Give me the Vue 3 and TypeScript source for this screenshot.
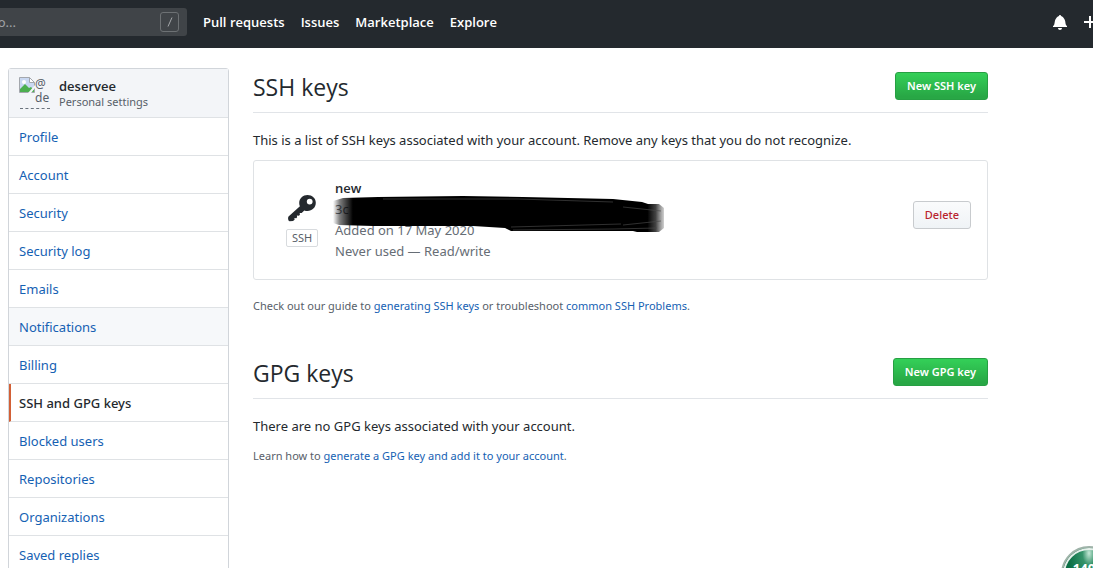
<script setup lang="ts">
const links: string[] = ['Pull requests', 'Issues', 'Marketplace', 'Explore']
const menu: string[] = [
  'Profile', 'Account', 'Security', 'Security log', 'Emails', 'Notifications', 'Billing',
  'SSH and GPG keys', 'Blocked users', 'Repositories', 'Organizations', 'Saved replies',
]
const current = 'SSH and GPG keys'
const hovered = 'Notifications'
</script>

<template>
  <div class="page">
    <header class="topbar">
      <div class="search">
        <input type="text" aria-label="Search or jump to" placeholder="Search or jump to..." />
        <kbd class="slash"><svg width="8" height="12" viewBox="0 0 8 12"><path d="M6 1.5 2 10.5" stroke="#a4a7aa" fill="none" /></svg></kbd>
      </div>
      <nav class="links">
        <a v-for="l in links" :key="l" href="#">{{ l }}</a>
      </nav>
      <div class="tools">
        <button type="button" aria-label="Notifications">
          <svg width="14" height="16" viewBox="0 0 14 16"><path fill="#fff" d="M14 12v1H0v-1l.73-.58c.77-.77.81-2.55 1.19-4.42C2.69 3.23 6 2 6 2c0-.55.45-1 1-1s1 .45 1 1c0 0 3.39 1.23 4.16 5 .38 1.88.42 3.66 1.19 4.42l.66.58H14zm-7 4c1.11 0 2-.89 2-2H5c0 1.11.89 2 2 2z" /></svg>
        </button>
        <button type="button" aria-label="Create new">
          <svg width="12" height="16" viewBox="0 0 12 16"><path fill="#fff" d="M12 9H7v5H5V9H0V7h5V2h2v5h5z" /></svg>
        </button>
      </div>
    </header>

    <div class="body">
      <nav class="menu" aria-label="Personal settings">
        <div class="account">
          <div class="avatar">
            <svg width="16" height="16" viewBox="0 0 16 16">
              <path d="M.5.5h10l5 5v10H.5z" fill="#c9d8f2" stroke="#a3a7ad" />
              <path d="M10.500.5v5h5z" fill="#fff" stroke="#a3a7ad" />
              <circle cx="5" cy="5" r="2" fill="#fff" />
              <path d="M1 15v-3l5-5 4 4 2-1 3 3v2z" fill="#4caf50" />
              <path d="M9 16l7-8v3l-4 5z" fill="#f3f5f8" />
            </svg>
            <span class="alt"><span>@</span><span>de</span></span>
            <i class="cut"></i>
          </div>
          <div class="who"><strong>deservee</strong><span>Personal settings</span></div>
        </div>
        <a v-for="m in menu" :key="m" href="#" :class="{ current: m === current, hovered: m === hovered }">{{ m }}</a>
      </nav>

      <main>
        <section>
          <div class="heading">
            <h2>SSH keys</h2>
            <button type="button" class="btn primary">New SSH key</button>
          </div>
          <p class="lead">This is a list of SSH keys associated with your account. Remove any keys that you do not recognize.</p>
          <div class="card">
            <div class="kind">
              <svg width="28" height="28" viewBox="0 0 28 28">
                <path fill="#24292e" fill-rule="evenodd" d="M19.500 1C15 1 11.200 4.500 11.200 9c0 1.200.2 2.200.7 3.200L.8 22.300C0 23 .1 24 .1 25l.4 1.500 1 .8 3.500-.3 1.600-1.300-.2-1.700 1.900.2.800-1-.2-1.700 2 .2 1-1-.2-1.700 2 .1 2.600-2.700c1 .4 2 .6 3.200.6 4.600 0 8.300-3.500 8.300-8.200S24.100 1 19.500 1zm2.200 3.700a2.900 2.900 0 1 1 0 5.800 2.900 2.900 0 0 1 0-5.800z" />
              </svg>
              <span>SSH</span>
            </div>
            <div class="details">
              <strong>new</strong>
              <code>3c</code>
              <span>Added on 17 May 2020</span>
              <span>Never used — Read/write</span>
              <svg class="redaction" width="332" height="42" viewBox="0 0 332 42" aria-hidden="true">
                <defs>
                  <linearGradient id="ends">
                    <stop offset="0" stop-color="#000" stop-opacity="0" />
                    <stop offset=".02" stop-color="#000" stop-opacity=".5" />
                    <stop offset=".06" stop-color="#000" />
                    <stop offset=".95" stop-color="#000" />
                    <stop offset=".975" stop-color="#222" stop-opacity=".85" />
                    <stop offset="1" stop-color="#444" stop-opacity=".25" />
                  </linearGradient>
                </defs>
                <path fill="url(#ends)" d="M0 6 10 3 45 2 130 1 190 2 280 4 309 7 315 9 326 9 331 13V33L326 37H304L300 36H178L172 33 140 31H40L6 30 0 28z" />
                <path d="M50 4H185l95 3M180 35l100-1 44-1M178 32l110-3M290 12l38 4M290 30l38-4" stroke="#494949" stroke-opacity=".65" fill="none" />
              </svg>
            </div>
            <button type="button" class="btn danger">Delete</button>
          </div>
          <p class="note">Check out our guide to <a href="#">generating SSH keys</a> or troubleshoot <a href="#">common SSH Problems</a>.</p>
        </section>

        <section>
          <div class="heading">
            <h2>GPG keys</h2>
            <button type="button" class="btn primary">New GPG key</button>
          </div>
          <p class="lead">There are no GPG keys associated with your account.</p>
          <p class="note small-gap">Learn how to <a href="#">generate a GPG key and add it to your account</a>.</p>
        </section>
      </main>
    </div>

    <div class="counter"><span>140</span></div>
  </div>
</template>

<style>
body {
  margin: 0;
}
</style>

<style scoped>
* {
  box-sizing: border-box;
}
.page {
  position: relative;
  height: 100vh;
  overflow: hidden;
  background: #fff;
  color: #24292e;
  font: 13px/20px "Segoe UI", "Noto Sans", "Open Sans", sans-serif;
}
a {
  color: #1561b3;
  text-decoration: none;
}
p, h2 {
  margin: 0;
}
button {
  font-family: inherit;
}
.topbar {
  display: flex;
  align-items: center;
  height: 48px;
  padding-bottom: 4px;
  background: #24292e;
  overflow: hidden;
}
.search {
  display: flex;
  align-items: center;
  flex: none;
  width: 300px;
  height: 28px;
  margin-left: -113px;
  padding: 0 8px 0 10px;
  background: #404448;
  border-radius: 3px;
}
.search input {
  flex: 1;
  min-width: 0;
  padding: 0;
  border: 0;
  outline: 0;
  background: none;
  color: #fff;
  font: inherit;
}
.search input::placeholder {
  color: #a0a3a6;
}
.slash {
  display: flex;
  align-items: center;
  justify-content: center;
  width: 19px;
  height: 20px;
  border: 1px solid #6d7174;
  border-radius: 3px;
}
.links {
  display: flex;
  flex: 1;
  gap: 16px;
  margin-left: 16px;
  font-family: "Segoe UI", "Open Sans", sans-serif;
}
.links a {
  color: #fff;
  font-weight: 600;
}
.tools {
  display: flex;
  gap: 17px;
  margin-right: -3px;
}
.tools button {
  display: flex;
  padding: 0;
  border: 0;
  background: none;
}
.body {
  display: grid;
  grid-template-columns: 221px minmax(0, 1fr);
  column-gap: 24px;
  align-items: start;
  padding: 20px 105px 0 8px;
}
.menu {
  border: 1px solid #d1d5da;
  border-radius: 3px;
}
.menu > a {
  display: block;
  height: 38px;
  padding: 9px 10px 8px;
  border-bottom: 1px solid #dfe2e5;
}
.menu > .hovered {
  background: #f6f8fa;
}
.menu > .current {
  padding-left: 8px;
  border-left: 2px solid #d26036;
  color: #24292e;
  font-weight: 500;
}
.account {
  display: flex;
  gap: 9px;
  height: 49px;
  padding: 8px 10px;
  background: #f3f5f8;
  border-bottom: 1px solid #dfe2e5;
}
.avatar {
  position: relative;
  display: flex;
  width: 31px;
  height: 32px;
  color: #586069;
  font-size: 12px;
}
.avatar svg {
  flex: none;
}
.alt {
  display: flex;
  flex-direction: column;
  line-height: 14px;
}
.cut {
  position: absolute;
  bottom: 0;
  left: 1px;
  right: 0;
  border-bottom: 1px dashed #6a737d;
}
.who {
  display: flex;
  flex-direction: column;
  line-height: 16px;
  padding-top: 1px;
}
.who strong,
.details strong {
  font-family: "Segoe UI", "Open Sans", sans-serif;
  font-weight: 600;
}
.who span {
  color: #586069;
  font-size: 11px;
}
.heading {
  display: flex;
  align-items: center;
  justify-content: space-between;
  height: 45px;
  padding-bottom: 8px;
  border-bottom: 1px solid #e1e4e8;
}
h2 {
  padding-top: 2px;
  font-family: "Segoe UI", "Open Sans", sans-serif;
  font-size: 23px;
  font-weight: 400;
  line-height: 34px;
}
.btn {
  height: 28px;
  padding: 0 11px;
  border-radius: 3px;
  font-size: 11px;
  font-weight: 600;
  line-height: 20px;
}
.primary {
  border: 1px solid #279f43;
  background: linear-gradient(#34d058, #28a745 90%);
  color: #fff;
}
.danger {
  border: 1px solid #c8cbce;
  background: linear-gradient(#fafbfc, #eff3f6);
  color: #b9242f;
  font-weight: 500;
}
.lead {
  margin-top: 17px;
}
.card {
  display: flex;
  align-items: center;
  height: 120px;
  margin-top: 10px;
  padding: 0 16px 10px 32px;
  border: 1px solid #dfe2e5;
  border-radius: 3px;
}
.kind {
  display: flex;
  flex-direction: column;
  align-items: center;
  gap: 7px;
  width: 32px;
  padding-top: 10px;
}
.kind span {
  width: 32px;
  border: 1px solid #d8dbde;
  border-radius: 2px;
  color: #586069;
  font-size: 11px;
  line-height: 16px;
  text-align: center;
}
.details {
  position: relative;
  display: flex;
  flex: 1;
  flex-direction: column;
  margin-left: 17px;
  padding-top: 10px;
  color: #666d75;
  line-height: 21px;
}
.details strong {
  color: #24292e;
}
.details code {
  font-family: inherit;
}
.redaction {
  position: absolute;
  top: 27px;
  left: -2px;
}
.note {
  margin-top: 16px;
  color: #586069;
  font-size: 11px;
}
.small-gap {
  margin-top: 10px;
}
section + section {
  margin-top: 38px;
}
.counter {
  position: absolute;
  right: -24px;
  bottom: -34px;
  width: 56px;
  height: 56px;
  padding: 10px 10px 0 0;
  border: 2px solid #9fb3a9;
  border-radius: 50%;
  background: radial-gradient(ellipse at 50% 10%, #c5e8d7 0, #35936a 18%, #0b7046 55%);
  box-shadow: inset 0 0 0 2px #e6f0eb;
  color: #fff;
  font-size: 13px;
  font-weight: 700;
  text-align: center;
}
</style>
